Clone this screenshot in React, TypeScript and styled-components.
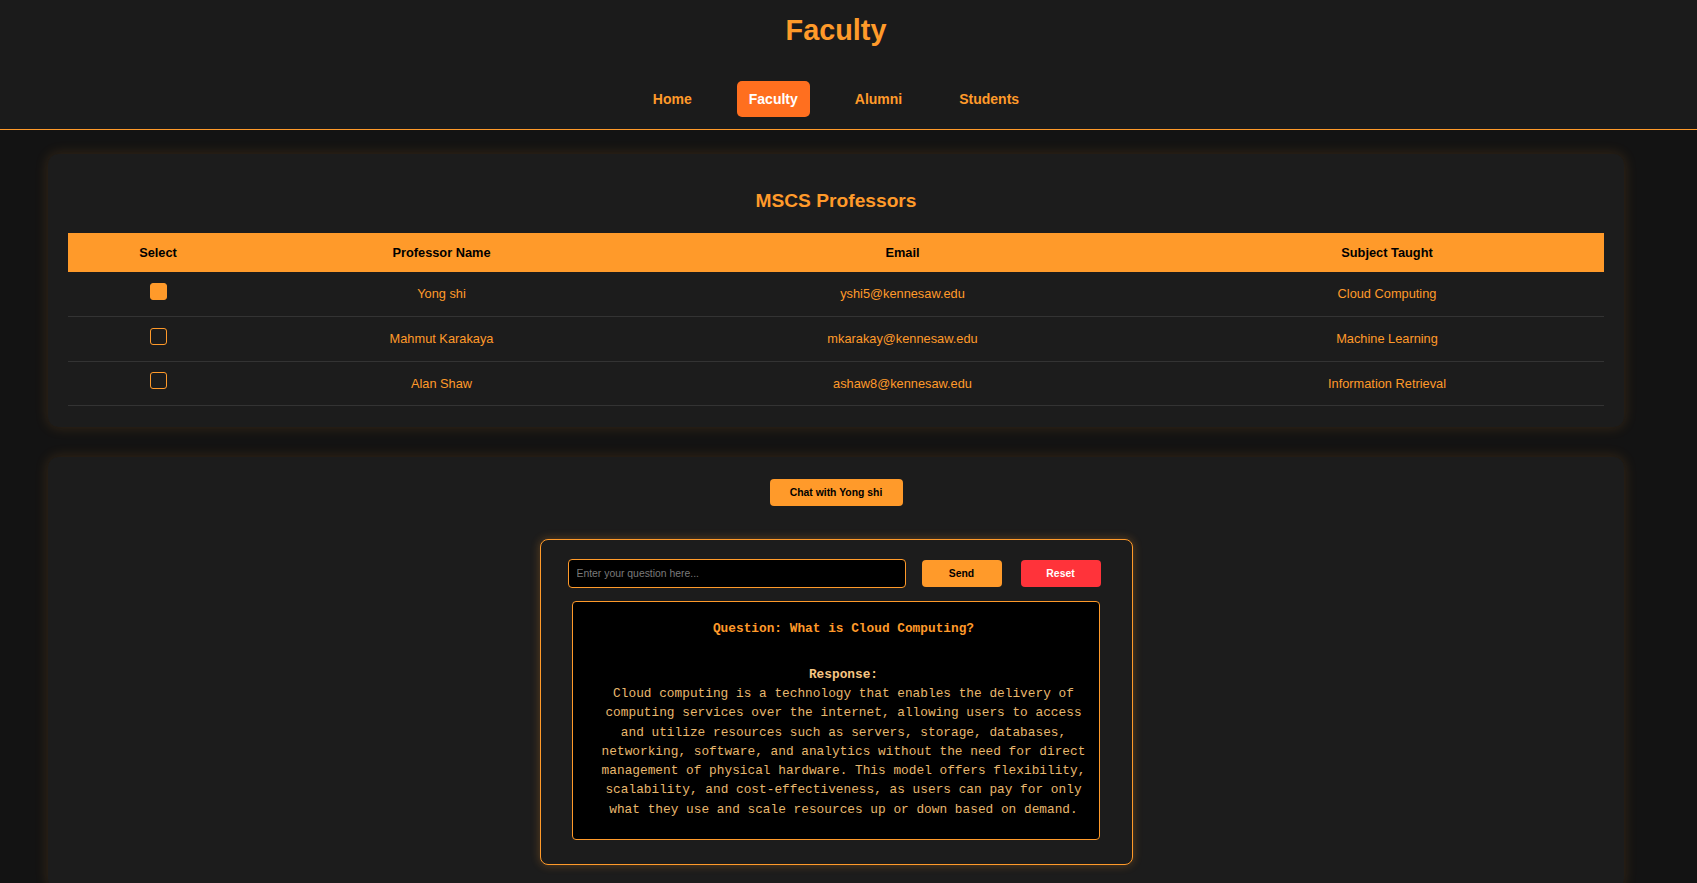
import React, { useState } from "react";
import styled, { createGlobalStyle } from "styled-components";

const ORANGE = "#ff9a2a";

const GlobalStyle = createGlobalStyle`
  html { scrollbar-width: none; }
  html::-webkit-scrollbar { display: none; }
  * { box-sizing: border-box; }
  body {
    margin: 0;
    background: #131313;
    font-family: "Liberation Sans", Arial, sans-serif;
    color: ${ORANGE};
  }
`;

const Header = styled.header`
  background: #1b1b1b;
  border-bottom: 1px solid ${ORANGE};
  padding: 14px 25px 12px 0;
  display: flex;
  flex-direction: column;
  align-items: center;
`;

const Title = styled.h1`
  margin: 0;
  font-size: 28.8px;
  line-height: 33px;
  font-weight: 700;
  color: ${ORANGE};
`;

const Nav = styled.nav`
  margin-top: 34px;
  display: flex;
  gap: 33px;
`;

const NavLink = styled.a<{ $active?: boolean }>`
  display: block;
  padding: 10px 12px;
  font-size: 14px;
  line-height: 16px;
  font-weight: 700;
  border-radius: 5px;
  text-decoration: none;
  cursor: pointer;
  color: ${(p) => (p.$active ? "#ffffff" : ORANGE)};
  background: ${(p) => (p.$active ? "#ff6f1f" : "transparent")};
`;

const Main = styled.main`
  padding: 24px 73px 0 48px;
  display: flex;
  flex-direction: column;
  gap: 30px;
`;

const Card = styled.section`
  background: #1c1c1c;
  border-radius: 10px;
  box-shadow: 0 0 14px rgba(255, 154, 42, 0.16);
  padding: 20px 20px 21px;
`;

const CardTitle = styled.h2`
  margin: 16px 0 21px;
  text-align: center;
  font-size: 19.2px;
  line-height: 22px;
  font-weight: 700;
  color: ${ORANGE};
`;

const Table = styled.table`
  width: 100%;
  border-collapse: collapse;
  table-layout: fixed;
  font-size: 12.8px;
`;

const Th = styled.th`
  background: ${ORANGE};
  color: #000;
  font-weight: 700;
  padding: 12px 8px;
  line-height: 15px;
  text-align: center;
`;

const Td = styled.td`
  padding: 14px 8px;
  line-height: 15.8px;
  text-align: center;
  color: ${ORANGE};
  border-bottom: 1px solid #333333;
  vertical-align: middle;
`;

const Check = styled.input`
  appearance: none;
  -webkit-appearance: none;
  display: block;
  margin: -5px auto 0;
  width: 17px;
  height: 17px;
  border: 1.5px solid ${ORANGE};
  border-radius: 3px;
  background: transparent;
  cursor: pointer;
  &:checked {
    background: ${ORANGE};
  }
`;

const ChatCard = styled(Card)`
  padding: 22px 20px 24px;
  display: flex;
  flex-direction: column;
  align-items: center;
`;

const ChatButton = styled.button`
  border: none;
  border-radius: 4px;
  background: ${ORANGE};
  color: #000;
  font-family: inherit;
  font-weight: 700;
  font-size: 10.4px;
  line-height: 12px;
  padding: 7.5px 19px;
  width: 133px;
  cursor: pointer;
`;

const ChatBox = styled.div`
  margin-top: 33px;
  width: 593px;
  border: 1px solid ${ORANGE};
  border-radius: 8px;
  box-shadow: 0 0 10px rgba(255, 154, 42, 0.3);
  background: #1c1c1c;
  padding: 19px 30px 24px 27px;
`;

const InputRow = styled.div`
  display: flex;
  align-items: center;
`;

const QuestionInput = styled.input`
  width: 338px;
  height: 29px;
  background: #000;
  border: 1px solid ${ORANGE};
  border-radius: 4px;
  padding: 0 8px;
  color: #ddd;
  font-family: inherit;
  font-size: 10.4px;
  outline: none;
  &::placeholder {
    color: #7a7a7a;
  }
`;

const ActionButton = styled.button<{ $variant: "send" | "reset"; $gap: number }>`
  margin-left: ${(p) => p.$gap}px;
  width: 80px;
  height: 27px;
  border: none;
  border-radius: 4px;
  font-family: inherit;
  font-weight: 700;
  font-size: 10.4px;
  cursor: pointer;
  background: ${(p) => (p.$variant === "send" ? ORANGE : "#ff333a")};
  color: ${(p) => (p.$variant === "send" ? "#000" : "#fff")};
`;

const ResponseBox = styled.div`
  margin: 13px 0 0 4px;
  width: 528px;
  background: #000;
  border: 1px solid ${ORANGE};
  border-radius: 4px;
  padding: 17px 5px 20px 21px;
  font-family: "Liberation Mono", "Courier New", monospace;
  font-size: 12.8px;
  line-height: 19.3px;
  text-align: center;
`;

const Question = styled.div`
  font-weight: 700;
  color: ${ORANGE};
`;

const Answer = styled.div`
  margin-top: 26px;
  color: #e8b86e;
`;

const AnswerLabel = styled.strong`
  display: block;
  color: #f6c583;
`;

const professors = [
  { name: "Yong shi", email: "yshi5@kennesaw.edu", subject: "Cloud Computing" },
  { name: "Mahmut Karakaya", email: "mkarakay@kennesaw.edu", subject: "Machine Learning" },
  { name: "Alan Shaw", email: "ashaw8@kennesaw.edu", subject: "Information Retrieval" },
];

export default function App() {
  const [selected, setSelected] = useState(0);
  const [question, setQuestion] = useState("");

  return (
    <>
      <GlobalStyle />
      <Header>
        <Title>Faculty</Title>
        <Nav>
          <NavLink>Home</NavLink>
          <NavLink $active>Faculty</NavLink>
          <NavLink>Alumni</NavLink>
          <NavLink>Students</NavLink>
        </Nav>
      </Header>
      <Main>
        <Card>
          <CardTitle>MSCS Professors</CardTitle>
          <Table>
            <colgroup>
              <col style={{ width: 180 }} />
              <col style={{ width: 387 }} />
              <col style={{ width: 535 }} />
              <col style={{ width: 434 }} />
            </colgroup>
            <thead>
              <tr>
                <Th>Select</Th>
                <Th>Professor Name</Th>
                <Th>Email</Th>
                <Th>Subject Taught</Th>
              </tr>
            </thead>
            <tbody>
              {professors.map((p, i) => (
                <tr key={p.email}>
                  <Td>
                    <Check
                      type="checkbox"
                      checked={selected === i}
                      onChange={() => setSelected(i)}
                    />
                  </Td>
                  <Td>{p.name}</Td>
                  <Td>{p.email}</Td>
                  <Td>{p.subject}</Td>
                </tr>
              ))}
            </tbody>
          </Table>
        </Card>
        <ChatCard>
          <ChatButton>Chat with {professors[selected].name}</ChatButton>
          <ChatBox>
            <InputRow>
              <QuestionInput
                placeholder="Enter your question here..."
                value={question}
                onChange={(e) => setQuestion(e.target.value)}
              />
              <ActionButton $variant="send" $gap={16}>Send</ActionButton>
              <ActionButton $variant="reset" $gap={19}>Reset</ActionButton>
            </InputRow>
            <ResponseBox>
              <Question>Question: What is Cloud Computing?</Question>
              <Answer>
                <AnswerLabel>Response:</AnswerLabel>
                Cloud computing is a technology that enables the delivery of computing services over the
                internet, allowing users to access and utilize resources such as servers, storage,
                databases, networking, software, and analytics without the need for direct management of
                physical hardware. This model offers flexibility, scalability, and cost-effectiveness, as
                users can pay for only what they use and scale resources up or down based on demand.
              </Answer>
            </ResponseBox>
          </ChatBox>
        </ChatCard>
      </Main>
    </>
  );
}
